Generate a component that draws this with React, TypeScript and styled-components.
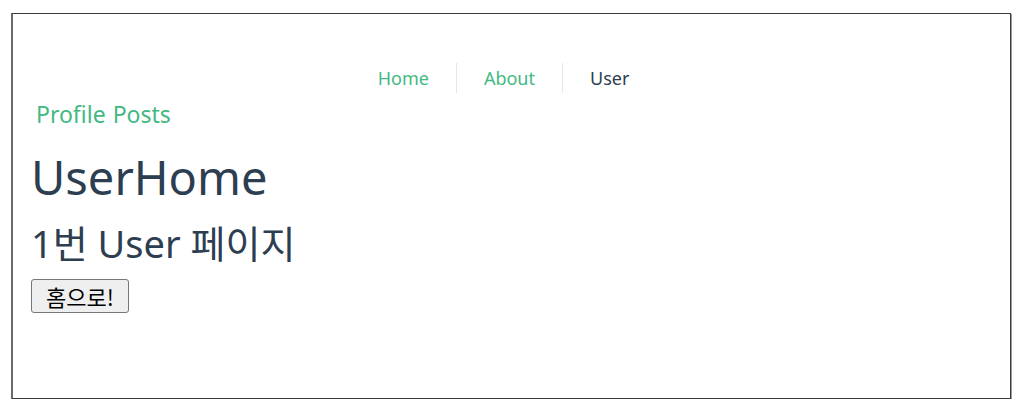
import React from "react";
import styled, { createGlobalStyle } from "styled-components";

const Global = createGlobalStyle`
  html, body { margin: 0; padding: 0; background: #fff; }
  body { font-family: "Noto Sans", "Noto Sans CJK KR", sans-serif; color: #2c3e50; }
`;

const Frame = styled.div`
  box-sizing: border-box;
  margin: 13px 0 0 11px;
  width: 1000px;
  height: 386px;
  border: 1px solid #3a3a3a;
  border-left: 2px solid #6a6a6a;
  box-shadow: 1px 1px 0 #9a9a9a;
  padding: 0 0 0 18px;
`;

const Nav = styled.nav`
  display: flex;
  justify-content: center;
  padding: 49px 0 0 0;
  margin-left: -18px;
  transform: translateX(-8px);
`;

const NavLink = styled.a<{ $active?: boolean }>`
  font-size: 18px;
  line-height: 30px;
  padding: 0 27px;
  color: ${(p) => (p.$active ? "#2c3e50" : "#42b983")};
  text-decoration: none;
  & + & { border-left: 1px solid #e6e6e6; }
`;

const SubNav = styled.div`
  display: flex;
  gap: 7px;
  margin-top: 4px;
  padding-left: 5px;
`;

const SubLink = styled.a`
  font-size: 23px;
  line-height: 34px;
  color: #42b983;
  text-decoration: none;
`;

const Title = styled.h1`
  font-size: 47px;
  font-weight: 400;
  margin: 14px 0 0 0;
  line-height: 64px;
`;

const Sub = styled.h2`
  font-size: 38px;
  font-weight: 400;
  margin: 8px 0 0 0;
  line-height: 52px;
`;

const Button = styled.button`
  display: block;
  font-family: "Noto Sans CJK KR", sans-serif;
  font-size: 22px;
  height: 34px;
  padding: 0 14px;
  border: 1px solid #767676;
  border-radius: 3px;
  background: #efefef;
  color: #000;
  margin-top: 10px;
`;

export default function App() {
  return (
    <>
      <Global />
      <Frame>
        <Nav>
          <NavLink href="#">Home</NavLink>
          <NavLink href="#">About</NavLink>
          <NavLink href="#" $active>User</NavLink>
        </Nav>
        <SubNav>
          <SubLink href="#">Profile</SubLink>
          <SubLink href="#">Posts</SubLink>
        </SubNav>
        <Title>UserHome</Title>
        <Sub>1번 User 페이지</Sub>
        <Button>홈으로!</Button>
      </Frame>
    </>
  );
}
